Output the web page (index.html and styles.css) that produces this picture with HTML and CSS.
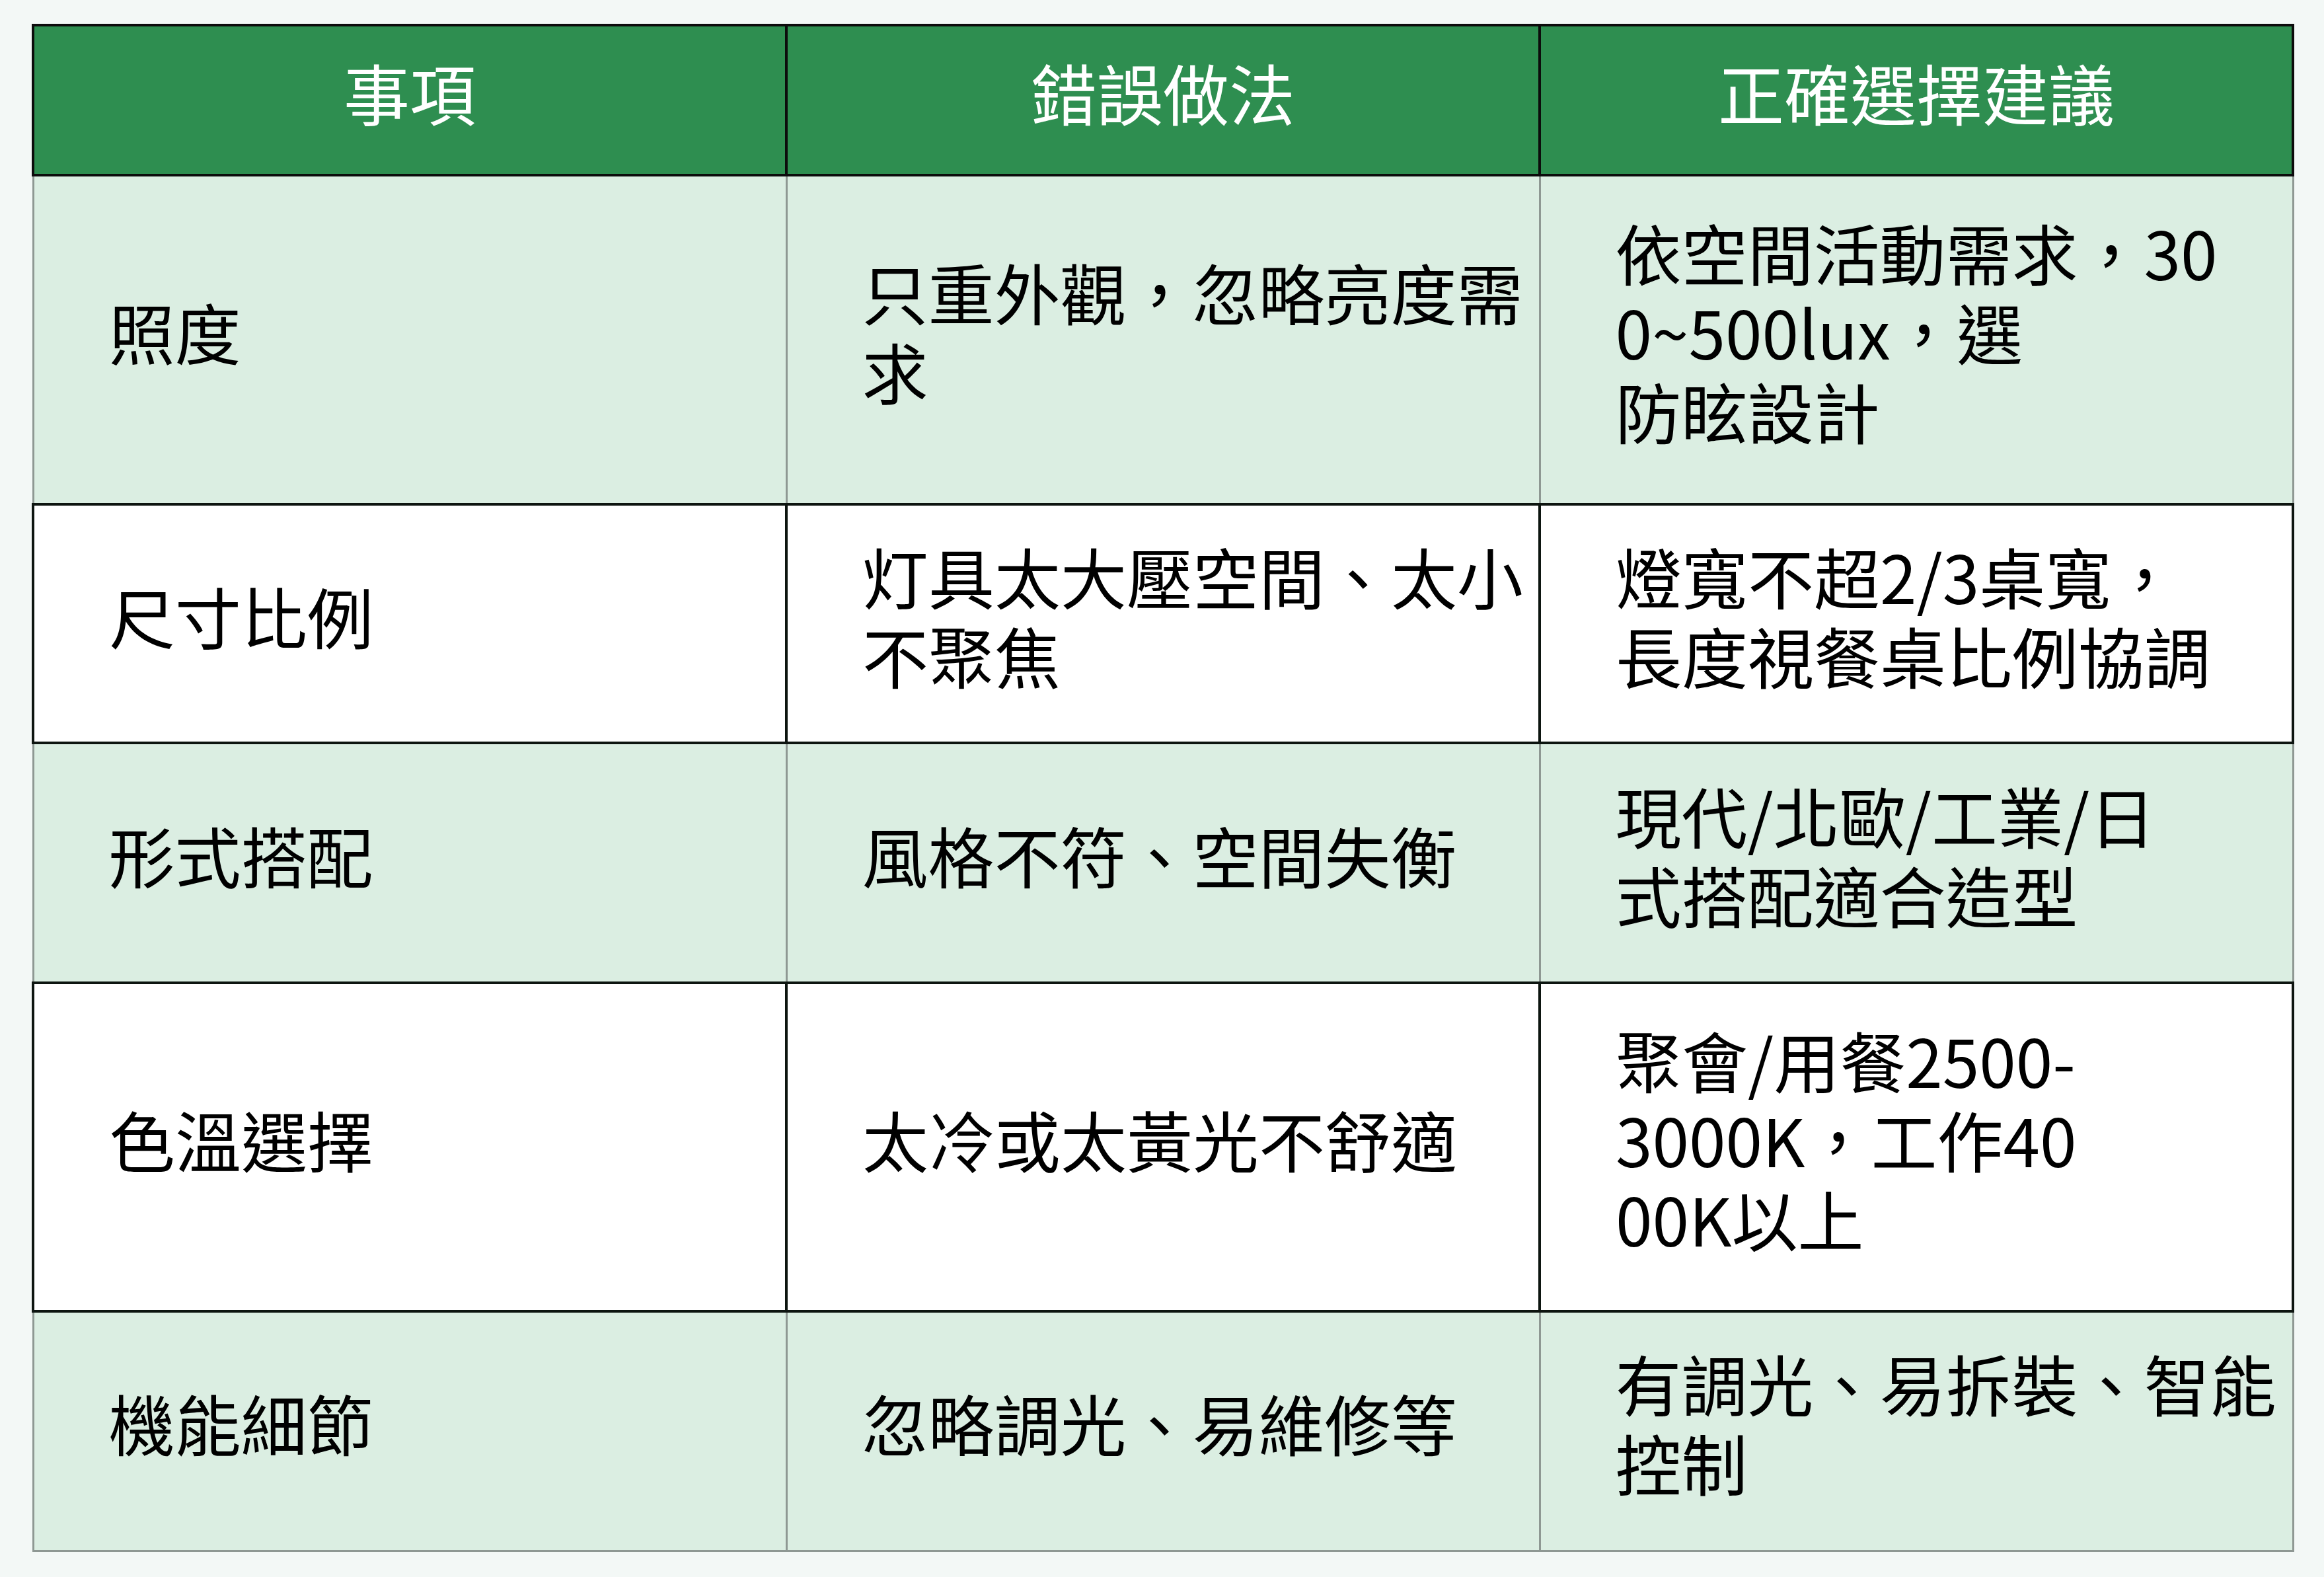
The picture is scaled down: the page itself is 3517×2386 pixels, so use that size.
FILE: index.html
```html
<!DOCTYPE html>
<html lang="zh-Hant">
<head>
<meta charset="utf-8">
<title>餐桌燈具選擇</title>
<link rel="stylesheet" href="styles.css">
</head>
<body>
<table class="guide">
  <colgroup>
    <col class="c1"><col class="c2"><col class="c3">
  </colgroup>
  <thead>
    <tr class="head">
      <th>事項</th>
      <th>錯誤做法</th>
      <th>正確選擇建議</th>
    </tr>
  </thead>
  <tbody>
    <tr class="row green tall">
      <td>照度</td>
      <td>只重外觀，忽略亮度需<br>求</td>
      <td>依空間活動需求，30<br>0~500lux，選<br>防眩設計</td>
    </tr>
    <tr class="row white short">
      <td>尺寸比例</td>
      <td>灯具太大壓空間、太小<br>不聚焦</td>
      <td>燈寬不超2/3桌寬，<br>長度視餐桌比例協調</td>
    </tr>
    <tr class="row green short3">
      <td>形式搭配</td>
      <td>風格不符、空間失衡</td>
      <td>現代/北歐/工業/日<br>式搭配適合造型</td>
    </tr>
    <tr class="row white tall4">
      <td>色溫選擇</td>
      <td>太冷或太黃光不舒適</td>
      <td>聚會/用餐2500-<br>3000K，工作40<br>00K以上</td>
    </tr>
    <tr class="row green short5">
      <td>機能細節</td>
      <td>忽略調光、易維修等</td>
      <td>有調光、易拆裝、智能<br>控制</td>
    </tr>
  </tbody>
</table>
</body>
</html>
```
FILE: styles.css
```css
html, body {
  margin: 0;
  padding: 0;
  background: #f3f8f6;
}

body {
  padding: 36px 0 0 48px;
  font-family: "Noto Sans CJK TC", "Noto Sans CJK SC", "Noto Sans", sans-serif;
}

.guide {
  border-collapse: collapse;
  table-layout: fixed;
  width: 3422px;
  font-size: 100px;
  line-height: 1.2;
  color: #000;
}

.c1, .c2, .c3 {
  width: 1140px;
}

.guide th,
.guide td {
  padding: 0 20px 26px 113px;
  vertical-align: middle;
  white-space: nowrap;
  text-align: left;
  font-weight: 400;
}

.head th {
  background: #2e8e50;
  color: #ffffff;
  text-align: center;
  padding: 0 0 26px 0;
  border: 4px solid #0c0c0c;
}

.head {
  height: 227px;
}

.row.green td {
  background: #dbeee2;
  border: 3px solid #8e9893;
}

.row.white td {
  background: #ffffff;
  border: 4px solid #0d1510;
}

.tall { height: 498px; }
.short { height: 361px; }
.short3 { height: 363px; }
.tall4 { height: 497px; }
.short5 { height: 362px; }
```
